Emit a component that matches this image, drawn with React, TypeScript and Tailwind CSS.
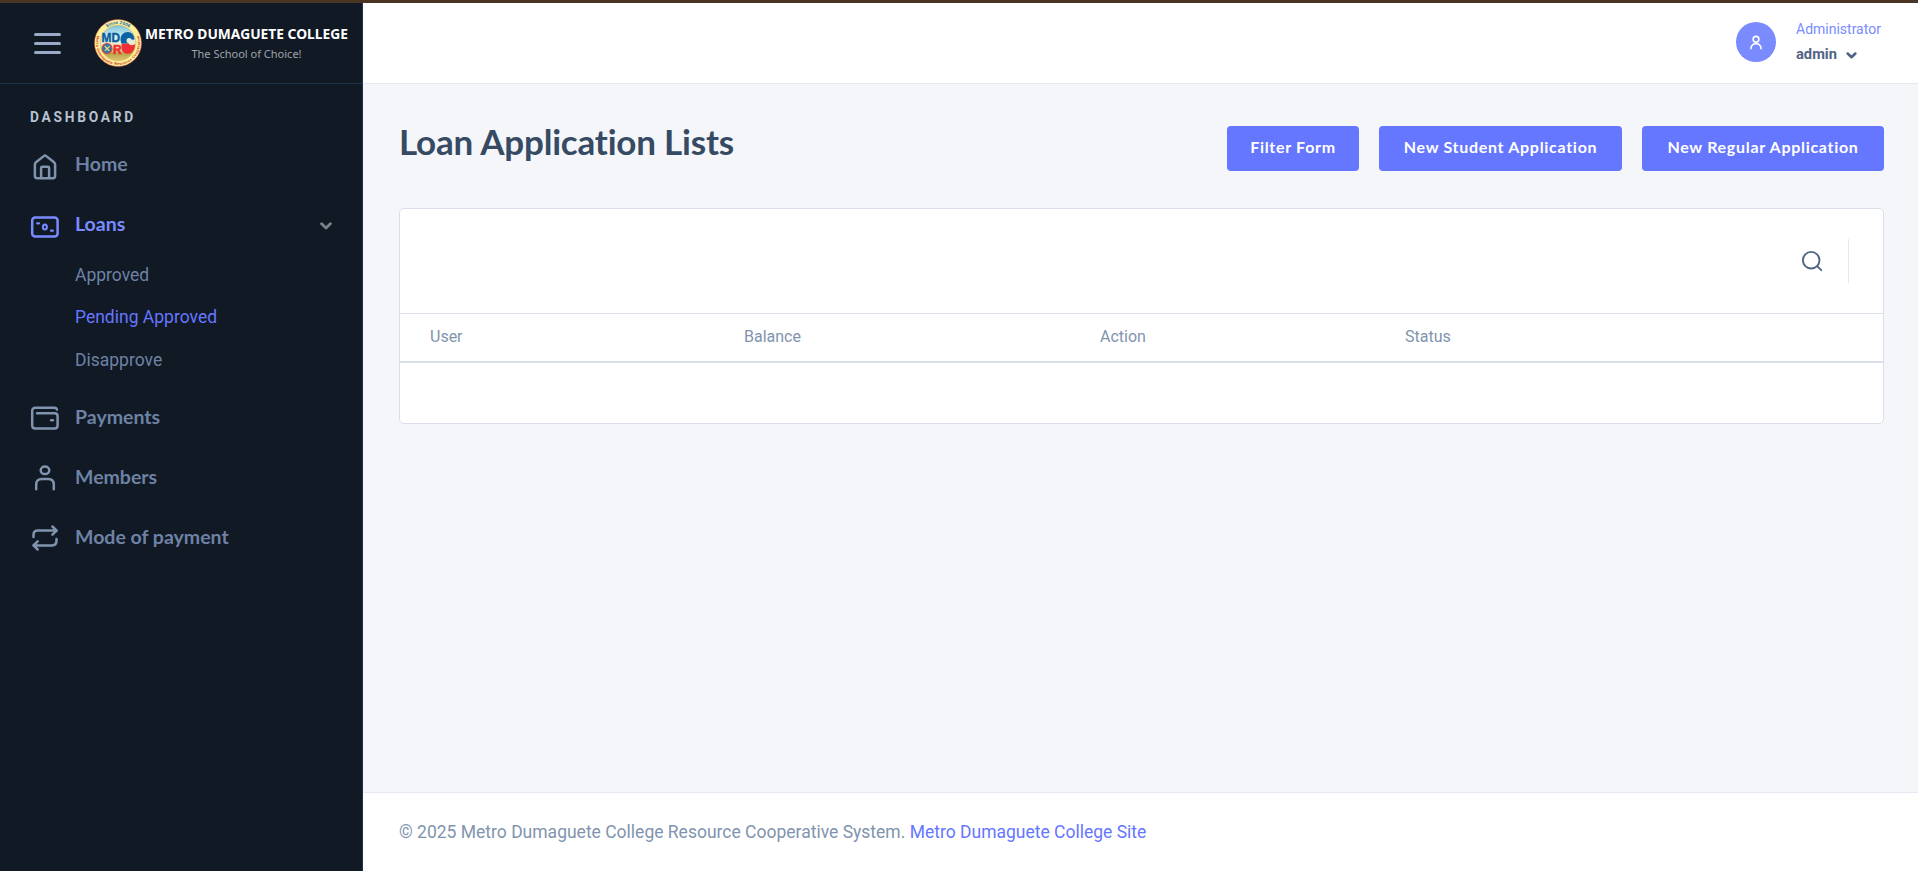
import type { ReactNode } from "react";

function Icon({ children }: { children: ReactNode }) {
  return (
    <svg
      viewBox="0 0 30 30"
      className="h-[30px] w-[30px]"
      fill="none"
      stroke="currentColor"
      strokeWidth="2.5"
      strokeLinecap="round"
      strokeLinejoin="round"
    >
      {children}
    </svg>
  );
}

const HomeIcon = () => (
  <Icon>
    <path d="M4.9 12.6c0-1 .4-1.7 1.1-2.3l7.7-6.2c.8-.7 1.8-.7 2.6 0l7.7 6.2c.7.6 1.1 1.3 1.1 2.3v11.5c0 1.3-.9 2.2-2.2 2.2H7.1c-1.3 0-2.2-.9-2.2-2.2z" />
    <path d="M11.1 26V15.900c0-.8.4-1.200 1.200-1.200h5.600c.8 0 1.200.4 1.200 1.200V26" />
  </Icon>
);

const LoansIcon = () => (
  <Icon>
    <rect x="2.2" y="5.6" width="25.4" height="18.8" rx="3" />
    <ellipse cx="14.9" cy="14.9" rx="2" ry="2.5" strokeWidth="2" />
    <path d="M7.2 11.3h1.800M21 18.700h1.900" strokeWidth="2.200" />
  </Icon>
);

const PaymentsIcon = () => (
  <Icon>
    <path d="M26.900 5.600c-.2-1.200-1.100-1.900-2.300-1.900H5.200c-1.800 0-3 1.200-3 3v14.700c0 1.800 1.200 3 3 3h19.400c1.800 0 3-1.200 3-3v-9.200c0-1.800-1.200-3-3-3H7" />
    <path d="M21.200 16.300h1.700" />
  </Icon>
);

const MembersIcon = () => (
  <Icon>
    <ellipse cx="15" cy="6.300" rx="4.300" ry="3.800" />
    <path d="M6.200 25.300v-4.600c0-3.800 2-5.700 5.600-5.700h6.400c3.600 0 5.600 1.900 5.600 5.700v4.600" />
  </Icon>
);

const ModeIcon = () => (
  <Icon>
    <path d="M3.500 12.900v-2c0-2.800 1.600-4.300 4.400-4.300H26.500M22.400 2.500l4.300 4.100-4.300 4.100" />
    <path d="M26.500 15.100v2c0 2.800-1.600 4.300-4.400 4.300H3.500M7.700 17.300l-4.300 4.100 4.300 4.100" />
  </Icon>
);

function Chevron({ className }: { className: string }) {
  return (
    <svg
      viewBox="0 0 12 8"
      className={className}
      fill="none"
      stroke="currentColor"
      strokeWidth="2.9"
      strokeLinecap="round"
      strokeLinejoin="round"
    >
      <path d="M1.600 1.700L6 6l4.400-4.300" />
    </svg>
  );
}

function Logo() {
  return (
    <svg viewBox="0 0 48 48" className="h-12 w-12 shrink-0">
      <defs>
        <linearGradient id="sky" x1="0" y1="0" x2="0" y2="1">
          <stop offset="0" stopColor="#7cc4dc" />
          <stop offset="0.35" stopColor="#d8f0f2" />
          <stop offset="0.6" stopColor="#f1e9b8" />
          <stop offset="0.8" stopColor="#b8a648" />
          <stop offset="1" stopColor="#e3c27a" />
        </linearGradient>
        <path id="ring-top" d="M5 24a19 19 0 0 1 38 0" />
        <path id="ring-bottom" d="M4 14.500A22.100 22.100 0 1 0 44 14.500" />
      </defs>
      <circle cx="24" cy="24" r="23.500" fill="#fdf29c" stroke="#e0584a" strokeWidth="0.500" />
      <circle cx="24" cy="24" r="17.800" fill="url(#sky)" stroke="#d9b24c" strokeWidth="0.600" />
      <text fontFamily="Liberation Sans" fontSize="4.600" fontWeight="700" fill="#1565a8">
        <textPath href="#ring-top" startOffset="50%" textAnchor="middle">Since 2006</textPath>
      </text>
      <text fontFamily="Liberation Sans" fontSize="3.800" fontWeight="700" fill="#d6342c">
        <textPath href="#ring-bottom" startOffset="50%" textAnchor="middle" textLength="84">
          Metro Dumaguete Resource Cooperative
        </textPath>
      </text>
      <path d="M40.500 20.500c0-4.500-3-7.500-6.800-7.500-4.200 0-7.200 3.200-7.200 7.600 0 1.600.4 3 1.200 4.200l7-.2c-1.600-.6-2.200-1.600-2.200-3s1-2.600 2.600-2.600c1.400 0 2.200.7 2.600 1.800z" fill="#0d62a3" />
      <path d="M27.500 25l7.200-.4c1.200 2.300 4.200 2 6.300.4.300 5.500-2.600 9.800-7.300 9.800-3.600 0-6.200-2.800-6.200-6.300z" fill="#ee2f35" />
      <text x="7.600" y="23" fontFamily="Liberation Sans" fontSize="12.500" fontWeight="700" fill="#0b5c9c" stroke="#0b5c9c" strokeWidth="0.400" textLength="18.500" lengthAdjust="spacingAndGlyphs">
        MD
      </text>
      <text x="19" y="34.500" fontFamily="Liberation Sans" fontSize="12" fontWeight="700" fill="#ee2f35" stroke="#ee2f35" strokeWidth="0.600">
        R
      </text>
      <circle cx="13" cy="29.500" r="5" fill="#2e78ae" stroke="#dc4238" strokeWidth="1.100" />
      <path d="M10.700 27l4.600 5M15.700 27.200l-4.800 4.600" stroke="#e7d878" strokeWidth="1.200" />
    </svg>
  );
}

function MenuItem({ icon, label, active = false }: { icon: ReactNode; label: string; active?: boolean }) {
  return (
    <a className={`flex h-[60px] items-center pl-[30px] pr-[30px] ${active ? "text-[#798bff]" : "text-[#6e82a5]"}`}>
      <span className={`pt-[5px] ${active ? "" : "text-[#8094ae]"}`}>{icon}</span>
      <span className="ml-[15px] flex-1 font-['Lato',sans-serif] text-[19.5px] font-bold leading-[26px]">{label}</span>
      {active && <Chevron className="mt-[4px] h-2 w-3 text-[#7b8088]" />}
    </a>
  );
}

const subItems = [
  { label: "Approved", active: false },
  { label: "Pending Approved", active: true },
  { label: "Disapprove", active: false },
];

const buttons = [
  { label: "Filter Form", width: "w-[132px]" },
  { label: "New Student Application", width: "w-[243px]" },
  { label: "New Regular Application", width: "w-[242px]" },
];

export default function App() {
  return (
    <div className="flex h-[871px] flex-col overflow-hidden bg-[#f5f6fa] font-['Roboto',sans-serif] text-[17.5px] text-[#8094ae]">
      <div className="h-[3px] shrink-0 bg-[#4a3522]" />
      <div className="flex min-h-0 flex-1">
        <aside className="w-[363px] shrink-0 border-r border-[#203247] bg-[#101924]">
          <div className="flex h-[81px] items-center border-b border-[#203247]">
            <div className="ml-[34px] flex w-[27px] flex-col gap-[6px]">
              <span className="h-[3px] rounded-full bg-[#9aabc9]" />
              <span className="h-[3px] rounded-full bg-[#9aabc9]" />
              <span className="h-[3px] rounded-full bg-[#9aabc9]" />
            </div>
            <div className="ml-[32.5px] flex items-center">
              <Logo />
              <div className="ml-[3px] w-[204px] whitespace-nowrap text-center font-['Noto_Sans',sans-serif]">
                <div className="text-[13.8px] font-bold leading-[20px] text-white">METRO DUMAGUETE COLLEGE</div>
                <div className="text-[11px] leading-[19px] text-[#a0a3a8]">The School of Choice!</div>
              </div>
            </div>
          </div>
          <h6 className="pl-[30px] pt-[23px] text-[13.75px] font-bold leading-[20px] tracking-[2.75px] text-[#b7c2d0]">
            DASHBOARD
          </h6>
          <nav className="mt-[7px]">
            <MenuItem icon={<HomeIcon />} label="Home" />
            <MenuItem icon={<LoansIcon />} label="Loans" active />
            <ul className="pb-[5px]">
              {subItems.map((s) => (
                <li
                  key={s.label}
                  className={`flex h-[42.5px] items-center pb-px pl-[75px] text-[17.5px] ${s.active ? "text-[#6576ff]" : "text-[#6e82a5]"}`}
                >
                  {s.label}
                </li>
              ))}
            </ul>
            <MenuItem icon={<PaymentsIcon />} label="Payments" />
            <MenuItem icon={<MembersIcon />} label="Members" />
            <MenuItem icon={<ModeIcon />} label="Mode of payment" />
          </nav>
        </aside>

        <div className="flex min-w-0 flex-1 flex-col">
          <header className="flex h-[81px] shrink-0 items-center justify-end border-b border-[#e5e9f2] bg-white pr-[38px]">
            <div className="mb-[2px] flex h-10 w-10 items-center justify-center rounded-full bg-[#798bff] text-white">
              <svg viewBox="0 0 14 16" className="mt-[2px] h-4 w-[14px]" fill="none" stroke="currentColor" strokeWidth="1.600" strokeLinecap="round">
                <circle cx="7" cy="4.300" r="2.900" />
                <path d="M1.900 13.700c.2-3.400 2-5 5.100-5s4.900 1.600 5.100 5" />
              </svg>
            </div>
            <div className="mb-[2px] ml-5 w-[84px] whitespace-nowrap">
              <div className="text-[14px] leading-[24px] text-[#798bff]">Administrator</div>
              <div className="flex items-center text-[14.7px] font-bold leading-[26px] text-[#526484]">
                admin
                <Chevron className="ml-[9px] mt-[3px] h-[7px] w-[11px]" />
              </div>
            </div>
          </header>

          <main className="flex-1 pl-9 pr-[34px] pt-[42px]">
            <div className="flex h-[82px] justify-between">
              <h3 className="whitespace-nowrap font-['Lato',sans-serif] text-[35px] font-bold leading-[30px] tracking-[-0.2px] text-[#364a63] [font-variant-ligatures:none]">
                Loan Application Lists
              </h3>
              <div className="flex gap-5">
                {buttons.map((b) => (
                  <button
                    key={b.label}
                    className={`${b.width} h-[45px] whitespace-nowrap rounded-[4px] bg-[#6576ff] pb-[3px] font-['Lato',sans-serif] text-[16px] font-bold tracking-[0.7px] text-white`}
                  >
                    {b.label}
                  </button>
                ))}
              </div>
            </div>

            <section className="h-[216px] rounded-[5px] border border-[#dbdfea] bg-white">
              <div className="flex h-[104px] items-center justify-end pr-[34px]">
                <svg viewBox="0 0 22 22" className="mr-[25px] h-[22px] w-[22px]" fill="none" stroke="#526484" strokeWidth="1.900" strokeLinecap="round">
                  <circle cx="10.200" cy="10.200" r="8.300" />
                  <path d="M16.200 16.200l4 4" />
                </svg>
                <span className="h-11 w-px bg-[#e5e9f2]" />
              </div>
              <div className="grid h-[50px] grid-cols-[314px_356px_305px_1fr] items-center border-b-2 border-t border-[#dbdfea] pb-[2px] pl-[30px] text-base">
                <span>User</span>
                <span>Balance</span>
                <span>Action</span>
                <span>Status</span>
              </div>
            </section>
          </main>

          <footer className="flex h-[79px] shrink-0 items-center whitespace-nowrap border-t border-[#e5e9f2] bg-white pl-9">
            <p>
              © 2025 Metro Dumaguete College Resource Cooperative System.{" "}
              <a className="text-[#6576ff]">Metro Dumaguete College Site</a>
            </p>
          </footer>
        </div>
      </div>
    </div>
  );
}
